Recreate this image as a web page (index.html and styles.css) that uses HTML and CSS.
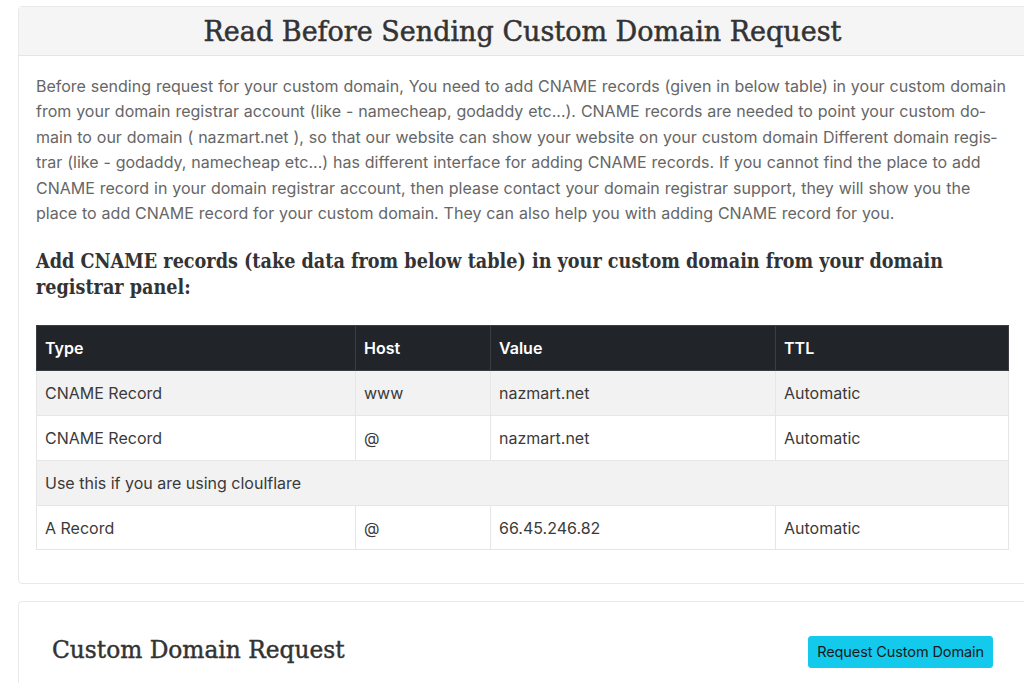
FILE: index.html
```html
<!DOCTYPE html>
<html lang="en">
<head>
    <meta charset="UTF-8">
    <meta name="viewport" content="width=device-width, initial-scale=1.0">
    <title>Custom Domain</title>
    <link rel="stylesheet" href="styles.css">
</head>
<body>
    <div class="page">
        <div class="card">
            <div class="card-header">
                <h2 class="card-title">Read Before Sending Custom Domain Request</h2>
            </div>
            <div class="card-body">
                <p class="intro">Before sending request for your custom domain, You need to add CNAME records (given in below table) in your custom domain from your domain registrar account (like - namecheap, godaddy etc...). CNAME records are needed to point your custom do&shy;main to our domain ( nazmart.net ), so that our website can show your website on your custom domain Different domain regis&shy;trar (like - godaddy, namecheap etc...) has different interface for adding CNAME records. If you cannot find the place to add CNAME record in your domain registrar account, then please contact your domain registrar support, they will show you the place to add CNAME record for your custom domain. They can also help you with adding CNAME record for you.</p>

                <h4 class="sub-title">Add CNAME records (take data from below table) in your custom domain from your domain registrar panel:</h4>

                <table class="records">
                    <thead>
                        <tr>
                            <th class="col-type">Type</th>
                            <th class="col-host">Host</th>
                            <th class="col-value">Value</th>
                            <th>TTL</th>
                        </tr>
                    </thead>
                    <tbody>
                        <tr>
                            <td>CNAME Record</td>
                            <td>www</td>
                            <td>nazmart.net</td>
                            <td>Automatic</td>
                        </tr>
                        <tr>
                            <td>CNAME Record</td>
                            <td>@</td>
                            <td>nazmart.net</td>
                            <td>Automatic</td>
                        </tr>
                        <tr>
                            <td colspan="4">Use this if you are using cloulflare</td>
                        </tr>
                        <tr>
                            <td>A Record</td>
                            <td>@</td>
                            <td>66.45.246.82</td>
                            <td>Automatic</td>
                        </tr>
                    </tbody>
                </table>
            </div>
        </div>

        <div class="card request-card">
            <div class="request-row">
                <h3 class="request-title">Custom Domain Request</h3>
                <button class="btn-info" type="button">Request Custom Domain</button>
            </div>
        </div>
    </div>
</body>
</html>
```

FILE: styles.css
```css
html, body {
    margin: 0;
    padding: 0;
    overflow: hidden;
}
body {
    background: #fff;
    font-family: Inter, "Noto Sans", sans-serif;
    color: #666;
}
.page {
    width: 1009px;
    margin-left: 18px;
    padding-top: 6px;
    display: flex;
    flex-direction: column;
    gap: 17px;
}
.card {
    border: 1px solid #e9e9e9;
    border-radius: 4px;
    background: #fff;
}
.card-header {
    background: #f5f5f5;
    border-bottom: 1px solid #e4e4e4;
    height: 48px;
    display: flex;
    align-items: center;
    justify-content: center;
}
/* medium weight: book face + thin stroke */
.card-title {
    margin: 0;
    font-family: "DejaVu Serif", serif;
    font-weight: 400;
    font-size: 27px;
    -webkit-text-stroke: 0.5px #333;
    color: #333;
}
.card-body {
    padding: 18px 17px 33px;
}
.intro {
    margin: 0;
    font-size: 16px;
    line-height: 25.4px;
    word-spacing: 0.4px;
    color: #666;
}
.sub-title {
    margin: 23px 0 24px;
    font-family: "DejaVu Serif Condensed", "DejaVu Serif", serif;
    font-weight: 700;
    font-size: 19.6px;
    line-height: 26px;
    color: #333;
}
.records {
    width: 100%;
    border-collapse: collapse;
    font-size: 16px;
    color: #3a3a3a;
}
.records th,
.records td {
    height: 44.75px;
    padding: 0 8px;
    text-align: left;
    border: 1px solid #e6e6e6;
    box-sizing: border-box;
}
.records th {
    background: #212529;
    color: #fff;
    font-weight: 600;
    border-color: #3a3d42;
    height: 45px;
}
.records tbody tr:nth-child(odd) td {
    background: #f2f2f2;
}
.col-type { width: 319px; }
.col-host { width: 135px; }
.col-value { width: 285px; }
.request-row {
    display: flex;
    justify-content: space-between;
    align-items: center;
    padding: 31px 33px 40px;
    height: 32px;
}
.request-title {
    margin: 0;
    font-family: "DejaVu Serif", serif;
    font-weight: 400;
    font-size: 23.3px;
    -webkit-text-stroke: 0.45px #333;
    color: #333;
}
.btn-info {
    background: #13c9ec;
    border: 1px solid #13c9ec;
    border-radius: 3px;
    color: #1a1a1a;
    font-family: Inter, "Noto Sans", sans-serif;
    font-size: 14.5px;
    letter-spacing: -0.1px;
    padding: 5px 8px;
    height: 32px;
    margin-top: 5px;
}
```
